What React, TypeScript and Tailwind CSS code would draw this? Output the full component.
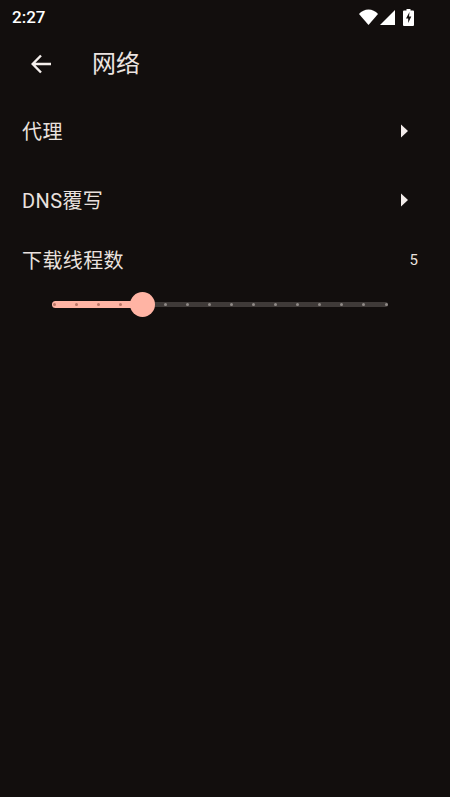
export default function App() {
  const ticks = Array.from({ length: 16 }, (_, i) => i);
  return (
    <div className="h-[797px] w-[450px] overflow-hidden bg-[#120e0d] text-[#e9e1de] font-['Roboto','Noto_Sans_CJK_SC',sans-serif]">
      <div className="flex h-[34px] items-center justify-between pl-3 pr-[36px] text-white">
        <span className="text-[17px] leading-none font-medium">2:27</span>
        <div className="flex items-center">
          <svg width="19" height="16" viewBox="0 0 19 16" aria-hidden="true">
            <path d="M0 5C2.500 2 6 .5 9.500 .5S16.500 2 19 5L9.500 16z" fill="#fff" />
          </svg>
          <svg className="ml-[2px]" width="15" height="15" viewBox="0 0 15 15" aria-hidden="true">
            <path d="M0 15L15 0v15z" fill="#fff" />
          </svg>
          <svg className="ml-[8px]" width="11" height="17" viewBox="0 0 11 17" aria-hidden="true">
            <path fillRule="evenodd" d="M3.500 0h4v1.500h2.500a1 1 0 0 1 1 1V16a1 1 0 0 1-1 1H1a1 1 0 0 1-1-1V2.500a1 1 0 0 1 1-1h2.500zM6.500 3L3 9.500h2.200V14L8.300 7.500H6z" fill="#fff" />
          </svg>
        </div>
      </div>

      <div className="flex h-[60px] items-center">
        <div className="ml-[31px] flex w-[61px] items-center">
          <svg width="20" height="20" viewBox="0 0 20 20" fill="none" stroke="#f5efec" strokeWidth="2.400" aria-hidden="true">
            <path d="M20 10H2M10 1.500L1.700 10l8.300 8.500" />
          </svg>
        </div>
        <span className="text-2xl leading-none text-[#ece4e1]">网络</span>
      </div>

      <div className="mt-[12px] flex h-[50px] items-center justify-between pl-[22px] pr-[42px]">
        <span className="pt-[2px] text-xl leading-none tracking-[0.4px]">代理</span>
        <Caret />
      </div>
      <div className="mt-[19px] flex h-[50px] items-center justify-between pl-[22px] pr-[42px]">
        <span className="pt-[2px] text-xl leading-none tracking-[0.4px]">DNS覆写</span>
        <Caret />
      </div>

      <div className="mt-[25px] flex h-[20px] items-center justify-between pl-[22px] pr-[32px]">
        <span className="pt-[2px] text-xl leading-none tracking-[0.4px]">下载线程数</span>
        <span className="text-[15px] leading-none">5</span>
      </div>

      <div className="relative ml-[52px] mt-[22px] h-[25px] w-[336px]">
        <div className="absolute left-0 top-[10px] h-[5px] w-full rounded-full bg-[#3f3a38]" />
        <div className="absolute left-0 top-[9px] h-[7px] w-[90px] rounded-full bg-[#ffb4a4]" />
        {ticks.map((i) => (
          <span
            key={i}
            className={i < 4 ? "absolute top-[11px] h-[3px] w-[3px] rounded-full bg-[#b87566]" : "absolute top-[11px] h-[3px] w-[3px] rounded-full bg-[#8f8986]"}
            style={{ left: 1 + i * 22.1 }}
          />
        ))}
        <div className="absolute left-[78px] top-0 h-[25px] w-[25px] rounded-full bg-[#ffb4a4]" />
      </div>
    </div>
  );
}

function Caret() {
  return (
    <svg width="7" height="14" viewBox="0 0 7 14" aria-hidden="true">
      <path d="M0 .5L7 7L0 13.500z" fill="#f3ecea" />
    </svg>
  );
}
